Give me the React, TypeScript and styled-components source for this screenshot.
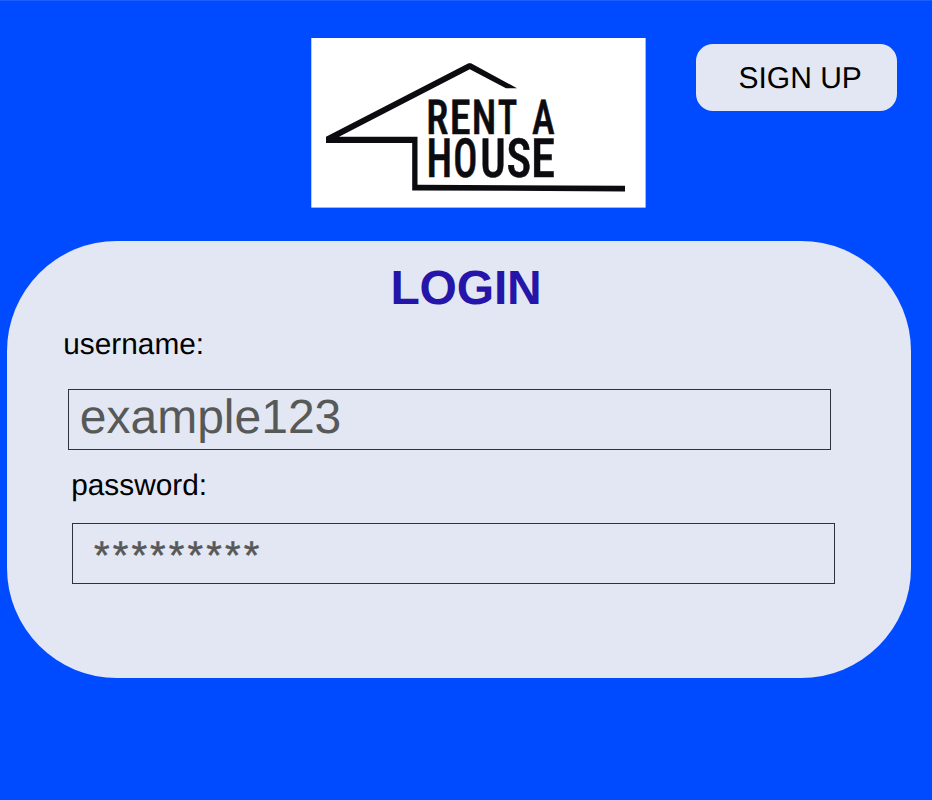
import React from "react";
import styled, { createGlobalStyle } from "styled-components";

const GlobalStyle = createGlobalStyle`
  * { box-sizing: border-box; }
  body { margin: 0; background: #004bff; }
`;

const Page = styled.main`
  width: 932px;
  height: 800px;
  overflow: hidden;
  background: #004bff;
  border-top: 1px solid #1c5eff;
  font-family: "Liberation Sans", Arial, sans-serif;
  text-rendering: geometricPrecision;
`;

const Header = styled.header`
  display: flex;
  align-items: flex-start;
  height: 240px;
  padding: 37px 0 0 311px;
`;

const Logo = styled.svg`
  display: block;
  width: 335px;
  height: 170px;
`;

const LogoText = styled.text`
  font-family: "Roboto Condensed", Roboto, sans-serif;
  font-stretch: 75%;
  font-weight: 500;
  fill: #0c0b10;
  stroke: #0c0b10;
  stroke-width: 0.6px;
  text-rendering: geometricPrecision;
`;

const SignUp = styled.button`
  width: 201px;
  height: 67px;
  margin: 6px 0 0 50px;
  padding: 0 0 0 42.5px;
  border: 0;
  border-radius: 17px;
  background: #e3e7f3;
  color: #000;
  font-family: inherit;
  font-size: 30px;
  line-height: 69px;
  text-align: left;
  text-rendering: inherit;
  white-space: nowrap;
`;

const Panel = styled.form`
  width: 904px;
  height: 437px;
  margin-left: 7px;
  padding-top: 19px;
  border-radius: 110px;
  background: #e3e7f3;
`;

const Title = styled.h1`
  margin: 0 0 0 383.5px;
  color: #2515a8;
  font-size: 48px;
  line-height: 57px;
  letter-spacing: -0.2px;
  font-weight: 700;
`;

const Label = styled.label<{ $left: number; $gap: number }>`
  display: block;
  width: max-content;
  margin-left: ${(p) => p.$left}px;
  padding-top: ${(p) => p.$gap}px;
  color: #000;
  font-size: 29.8px;
  line-height: 34px;
`;

const Field = styled.div<{ $left: number; $gap: number }>`
  width: 763px;
  height: 61px;
  margin: ${(p) => p.$gap}px 0 0 ${(p) => p.$left}px;
  border: 1px solid #30303f;
  color: #575958;
`;

const UserValue = styled.span`
  display: block;
  padding-left: 10.8px;
  font-size: 48px;
  line-height: 56px;
`;

const PasswordValue = styled.span`
  display: block;
  padding-left: 21px;
  font-size: 40px;
  line-height: 65px;
  letter-spacing: 3.14px;
  -webkit-text-stroke: 0.5px #575958;
`;

type Letter = { char: string; x: number; scale: number };

const topRow: Letter[] = [
  { char: "R", x: 115.3, scale: 0.84 },
  { char: "E", x: 138.8, scale: 0.88 },
  { char: "N", x: 160.8, scale: 0.83 },
  { char: "T", x: 186.7, scale: 0.76 },
  { char: "A", x: 221, scale: 0.8 },
];

const bottomRow: Letter[] = [
  { char: "H", x: 115.5, scale: 0.77 },
  { char: "O", x: 142.3, scale: 0.74 },
  { char: "U", x: 169.2, scale: 0.83 },
  { char: "S", x: 195.5, scale: 0.86 },
  { char: "E", x: 220.1, scale: 0.9 },
];

function LogoRow({ letters, y, size }: { letters: Letter[]; y: number; size: number }) {
  return (
    <>
      {letters.map((l) => (
        <LogoText
          key={l.char}
          fontSize={size}
          transform={`translate(${l.x} ${y}) scale(${l.scale} 1)`}
        >
          {l.char}
        </LogoText>
      ))}
    </>
  );
}

export default function App() {
  return (
    <>
      <GlobalStyle />
      <Page>
        <Header>
          <Logo viewBox="0 0 335 170" role="img" aria-label="Rent a house">
            <rect x="0.3" width="334.3" height="169.6" fill="#fff" />
            <path
              d="M15 98.8 L157.5 25.3 H160 L206 50.2 H195 L158.8 31.3 L28 98.8 H106.5 V146.8 L314 147.8 V153.4 L101.2 152.4 V105 H15 Z"
              fill="#0c0b10"
            />
            <LogoRow letters={topRow} y={96.1} size={48.1} />
            <LogoRow letters={bottomRow} y={139.3} size={54.1} />
          </Logo>
          <SignUp type="button">SIGN UP</SignUp>
        </Header>
        <Panel>
          <Title>LOGIN</Title>
          <Label $left={56.3} $gap={11}>username:</Label>
          <Field $left={61} $gap={27}>
            <UserValue>example123</UserValue>
          </Field>
          <Label $left={64.2} $gap={19}>password:</Label>
          <Field $left={65} $gap={20}>
            <PasswordValue>*********</PasswordValue>
          </Field>
        </Panel>
      </Page>
    </>
  );
}
